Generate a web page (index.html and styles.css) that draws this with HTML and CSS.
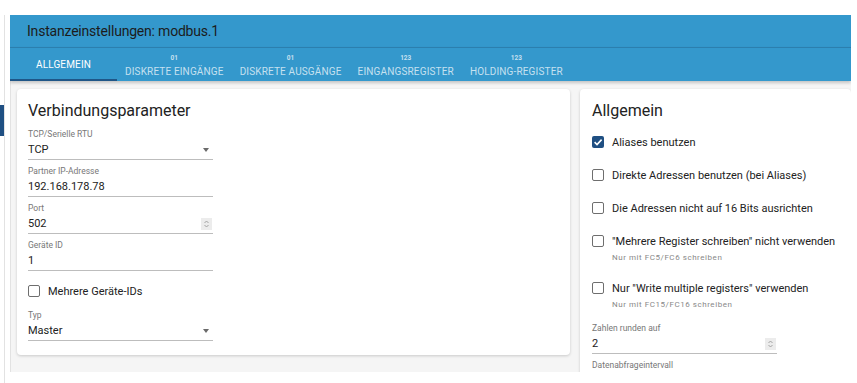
FILE: index.html
```html
<!DOCTYPE html>
<html lang="de">
<head>
    <meta charset="UTF-8">
    <meta name="viewport" content="width=device-width, initial-scale=1.0">
    <title>Instanzeinstellungen: modbus.1</title>
    <link rel="stylesheet" href="styles.css">
</head>
<body>
    <div class="page">
        <div class="rail">
            <div class="rail-mark"></div>
        </div>
        <div class="dialog">
            <div class="title-bar">Instanzeinstellungen: modbus.1</div>
            <div class="tabs">
                <div class="tab active"><span class="tab-label">Allgemein</span></div>
                <div class="tab"><span class="tab-icon">01</span><span class="tab-label">Diskrete Eingänge</span></div>
                <div class="tab"><span class="tab-icon">01</span><span class="tab-label">Diskrete Ausgänge</span></div>
                <div class="tab"><span class="tab-icon">123</span><span class="tab-label">Eingangsregister</span></div>
                <div class="tab"><span class="tab-icon">123</span><span class="tab-label">Holding-Register</span></div>
            </div>
            <div class="content">
                <div class="card card-left">
                    <h2>Verbindungsparameter</h2>
                    <div class="field">
                        <div class="label">TCP/Serielle RTU</div>
                        <div class="value">TCP<span class="arrow"></span></div>
                    </div>
                    <div class="field">
                        <div class="label">Partner IP-Adresse</div>
                        <div class="value">192.168.178.78</div>
                    </div>
                    <div class="field">
                        <div class="label">Port</div>
                        <div class="value">502
                            <svg class="spin" width="11" height="12" viewBox="0 0 11 12"><rect width="11" height="12" fill="#ececec"/><path d="M3.5 5 L5.5 3 L7.5 5 M3.5 7 L5.5 9 L7.5 7" fill="none" stroke="#9a9a9a" stroke-width="0.9"/></svg>
                        </div>
                    </div>
                    <div class="field">
                        <div class="label">Geräte ID</div>
                        <div class="value">1</div>
                    </div>
                    <div class="check-row check-single">
                        <span class="box"></span>
                        <span>Mehrere Geräte-IDs</span>
                    </div>
                    <div class="field">
                        <div class="label">Typ</div>
                        <div class="value">Master<span class="arrow"></span></div>
                    </div>
                </div>
                <div class="card card-right">
                    <h2>Allgemein</h2>
                    <div class="options">
                        <div class="opt">
                            <div class="check-row">
                                <span class="box checked">
                                    <svg width="12" height="12" viewBox="0 0 12 12"><path d="M2.6 6.2 L5 8.5 L9.6 3.6" fill="none" stroke="#fff" stroke-width="1.6"/></svg>
                                </span>
                                <span>Aliases benutzen</span>
                            </div>
                        </div>
                        <div class="opt">
                            <div class="check-row"><span class="box"></span><span>Direkte Adressen benutzen (bei Aliases)</span></div>
                        </div>
                        <div class="opt">
                            <div class="check-row"><span class="box"></span><span>Die Adressen nicht auf 16 Bits ausrichten</span></div>
                        </div>
                        <div class="opt">
                            <div class="check-row"><span class="box"></span><span>"Mehrere Register schreiben" nicht verwenden</span></div>
                            <div class="hint">Nur mit FC5/FC6 schreiben</div>
                        </div>
                        <div class="opt">
                            <div class="check-row"><span class="box"></span><span>Nur "Write multiple registers" verwenden</span></div>
                            <div class="hint">Nur mit FC15/FC16 schreiben</div>
                        </div>
                    </div>
                    <div class="field field-round">
                        <div class="label">Zahlen runden auf</div>
                        <div class="value">2
                            <svg class="spin" width="11" height="12" viewBox="0 0 11 12"><rect width="11" height="12" fill="#ececec"/><path d="M3.5 5 L5.5 3 L7.5 5 M3.5 7 L5.5 9 L7.5 7" fill="none" stroke="#9a9a9a" stroke-width="0.9"/></svg>
                        </div>
                    </div>
                    <div class="field field-poll">
                        <div class="label">Datenabfrageintervall</div>
                        <div class="value"></div>
                    </div>
                </div>
            </div>
        </div>
    </div>
</body>
</html>
```

FILE: styles.css
```css
body {
    margin: 0;
    font-family: Roboto, "Liberation Sans", Arial, sans-serif;
    background-color: white;
    color: #222;
}

.page {
    display: flex;
    height: 383px;
}

.rail {
    width: 4px;
    border-right: 1px solid #e2e2e2;
    margin-top: 15px;
    margin-right: 5px;
}

.rail-mark {
    width: 4px;
    height: 31px;
    margin-top: 90px;
    background-color: #1f4f82;
}

.dialog {
    width: 841px;
    margin-top: 15px;
    height: 357px;
    display: flex;
    flex-direction: column;
    overflow: hidden;
}

.title-bar {
    flex-shrink: 0;
    height: 32px;
    padding-left: 17px;
    display: flex;
    align-items: center;
    background-color: #3498cc;
    font-size: 14px;
    letter-spacing: -0.2px;
    color: #1c1c1c;
}

.tabs {
    flex-shrink: 0;
    display: flex;
    height: 34px;
    box-sizing: border-box;
    background-color: #3498cc;
    border-top: 1px solid #2b7fae;
    box-shadow: 0 2px 3px rgba(0, 0, 0, 0.2);
    position: relative;
    z-index: 1;
}

.tab {
    display: flex;
    flex-direction: column;
    align-items: center;
    justify-content: center;
    padding: 2px 8px 0;
    color: rgba(255, 255, 255, 0.72);
}

.tab.active {
    width: 107px;
    box-sizing: border-box;
    color: white;
    border-bottom: 2px solid #1f5687;
    padding-top: 2px;
}

.tab-icon {
    font-size: 6.5px;
    font-weight: bold;
    line-height: 8px;
    margin-bottom: 4px;
}

.tab-label {
    font-size: 10px;
    text-transform: uppercase;
    letter-spacing: 0.15px;
    line-height: 12px;
}

.content {
    flex: 1;
    display: flex;
    gap: 10px;
    align-items: flex-start;
    padding: 8px 0 0 6px;
    background-color: #f5f5f5;
    border-left: 1px solid #e2e2e2;
}

.card {
    background-color: white;
    border-radius: 4px;
    box-shadow: 0 1px 3px rgba(0, 0, 0, 0.18);
    padding: 10px 11px 14px;
}

.card-left {
    width: 531px;
}

.card-right {
    flex: 1;
    padding-left: 12px;
    min-height: 300px;
}

h2 {
    margin: 0;
    font-size: 16px;
    font-weight: normal;
    line-height: 24px;
    color: #222;
}

.card-left h2 {
    margin-bottom: 5px;
}

.field {
    width: 185px;
    margin-top: 5px;
}

.card-left h2 + .field {
    margin-top: 0;
}

.label {
    font-size: 8.5px;
    line-height: 12px;
    color: #777;
}

.value {
    height: 19px;
    display: flex;
    align-items: center;
    justify-content: space-between;
    font-size: 11px;
    border-bottom: 1px solid #bdbdbd;
}

.arrow {
    width: 0;
    height: 0;
    margin-right: 4px;
    border-left: 3.5px solid transparent;
    border-right: 3.5px solid transparent;
    border-top: 4px solid #6a6a6a;
}

.spin {
    margin-right: 1px;
}

.check-row {
    display: flex;
    align-items: center;
    gap: 8px;
    height: 20px;
    font-size: 11px;
    white-space: nowrap;
}

.check-single {
    margin: 10px 0 8px;
}

.box {
    flex-shrink: 0;
    width: 12px;
    height: 12px;
    box-sizing: border-box;
    border: 1.5px solid #6e6e6e;
    border-radius: 2px;
    display: flex;
}

.box.checked {
    border: none;
    background-color: #1f4f82;
}

.options {
    display: flex;
    flex-direction: column;
    gap: 13px;
    margin-top: 9px;
}

.hint {
    font-size: 8px;
    line-height: 10px;
    padding: 2px 0 2px 20px;
    color: #888;
    letter-spacing: 0.55px;
}

.field-round {
    margin-top: 10px;
}

.field-poll {
    margin-top: 5px;
}
```
